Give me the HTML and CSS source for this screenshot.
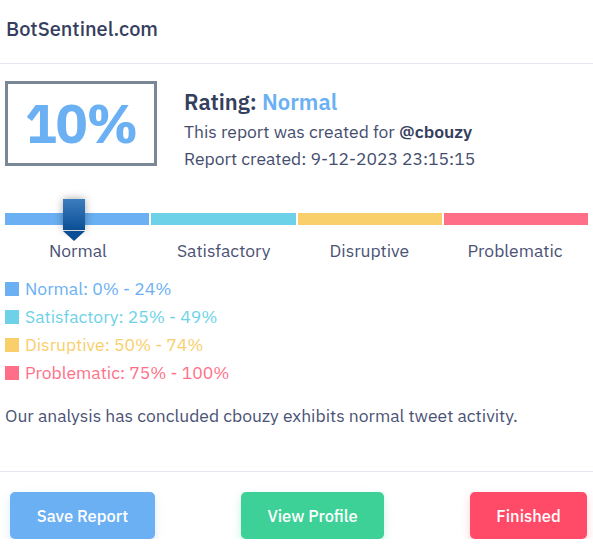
FILE: index.html
```html
<!DOCTYPE html>
<html lang="en">
<head>
<meta charset="utf-8">
<title>BotSentinel Report</title>
<link rel="stylesheet" href="styles.css">
</head>
<body>
<header class="header">BotSentinel.com</header>
<main class="content">
  <section class="summary">
    <div class="score-box">10%</div>
    <div class="summary-text">
      <h2 class="rating">Rating: <span class="rating-value">Normal</span></h2>
      <p class="line">This report was created for <strong>@cbouzy</strong></p>
      <p class="line">Report created: 9-12-2023 23:15:15</p>
    </div>
  </section>

  <section class="scale">
    <div class="bar">
      <span class="seg seg-normal"></span>
      <span class="seg seg-satisfactory"></span>
      <span class="seg seg-disruptive"></span>
      <span class="seg seg-problematic"></span>
      <div class="marker" style="left:10%">
        <span class="marker-body"></span>
        <span class="marker-tip"></span>
      </div>
    </div>
    <div class="scale-labels">
      <span>Normal</span>
      <span>Satisfactory</span>
      <span>Disruptive</span>
      <span>Problematic</span>
    </div>
  </section>

  <ul class="legend">
    <li class="legend-item c-normal"><span class="swatch"></span>Normal: 0% - 24%</li>
    <li class="legend-item c-satisfactory"><span class="swatch"></span>Satisfactory: 25% - 49%</li>
    <li class="legend-item c-disruptive"><span class="swatch"></span>Disruptive: 50% - 74%</li>
    <li class="legend-item c-problematic"><span class="swatch"></span>Problematic: 75% - 100%</li>
  </ul>

  <p class="conclusion">Our analysis has concluded cbouzy exhibits normal tweet activity.</p>
</main>
<footer class="footer">
  <button class="btn btn-blue">Save Report</button>
  <button class="btn btn-green">View Profile</button>
  <button class="btn btn-red">Finished</button>
</footer>
</body>
</html>
```
FILE: styles.css
```css
* { box-sizing: border-box; }
html, body { margin: 0; padding: 0; background: #fff; }
body {
  font-family: "IBM Plex Sans", "Noto Sans", "Liberation Sans", sans-serif;
  color: #444d6d;
  width: 593px;
}
.header {
  padding: 18px 6px 23px;
  font-size: 20px;
  line-height: 22px;
  font-weight: 500;
  color: #353e5d;
  border-bottom: 1px solid #e5e8ee;
}
.content { padding: 17px 5px 0; }
.summary { display: flex; align-items: flex-start; gap: 27px; }
.score-box {
  width: 152px;
  height: 85px;
  border: 3px solid #7a8796;
  color: #6ab0f3;
  font-size: 53px;
  font-weight: 700;
  display: flex;
  align-items: center;
  justify-content: center;
  letter-spacing: -1px;
}
.summary-text { padding-top: 7px; }
.rating {
  margin: 0 0 2px;
  font-size: 22px;
  line-height: 28px;
  font-weight: 600;
  color: #353e5d;
}
.rating-value { color: #6ab0f3; }
.line { margin: 0; font-size: 17.5px; line-height: 27px; color: #444d6d; }
.line strong { font-weight: 600; color: #353e5d; }

.scale { margin-top: 41px; }
.bar { position: relative; display: flex; gap: 2px; height: 12px; width: 583px; }
.seg { flex: 1; }
.seg-normal { background: #6ab0f3; }
.seg-satisfactory { background: #6dd2e8; }
.seg-disruptive { background: #f8cf6b; }
.seg-problematic { background: #ff7088; }
.marker {
  position: absolute;
  top: -14px;
  width: 22px;
  display: flex;
  flex-direction: column;
  gap: 1px;
}
.marker-body {
  height: 31px;
  background: linear-gradient(#3b7dbd, #0b4e95);
  box-shadow: 0 0 8px rgba(0, 0, 0, 0.35);
}
.marker-tip {
  width: 0; height: 0;
  border-left: 11px solid transparent;
  border-right: 11px solid transparent;
  border-top: 10px solid #0b4e95;
}
.scale-labels {
  display: grid;
  grid-template-columns: repeat(4, 1fr);
  width: 583px;
  margin-top: 14px;
  font-size: 17.5px;
  line-height: 24px;
  text-align: center;
  color: #4a5275;
}

.legend { list-style: none; margin: 12px 0 0; padding: 0; }
.legend-item { display: flex; align-items: center; gap: 6px; font-size: 17.5px; line-height: 28px; }
.swatch { width: 14px; height: 14px; background: currentColor; }
.c-normal { color: #6ab0f3; }
.c-satisfactory { color: #6dd2e8; }
.c-disruptive { color: #f8cf6b; }
.c-problematic { color: #ff7088; }

.conclusion { margin: 17px 0 0; font-size: 17.5px; line-height: 24px; color: #4a5275; }

.footer {
  margin-top: 43px;
  border-top: 1px solid #e5e8ee;
  padding: 20px 6px 0 10px;
  display: flex;
  justify-content: space-between;
}
.btn {
  font-family: inherit;
  border: none;
  border-radius: 5px;
  height: 47px;
  padding: 0;
  font-size: 16.5px;
  font-weight: 500;
  color: #fff;
  cursor: pointer;
}
.btn-blue { background: #6ab0f3; width: 145px; box-shadow: 0 4px 10px rgba(106, 176, 243, 0.25); }
.btn-green { background: #3dd198; width: 143px; box-shadow: 0 4px 10px rgba(61, 209, 152, 0.25); }
.btn-red { background: #ff4a68; width: 117px; box-shadow: 0 4px 10px rgba(255, 74, 104, 0.25); }
```
